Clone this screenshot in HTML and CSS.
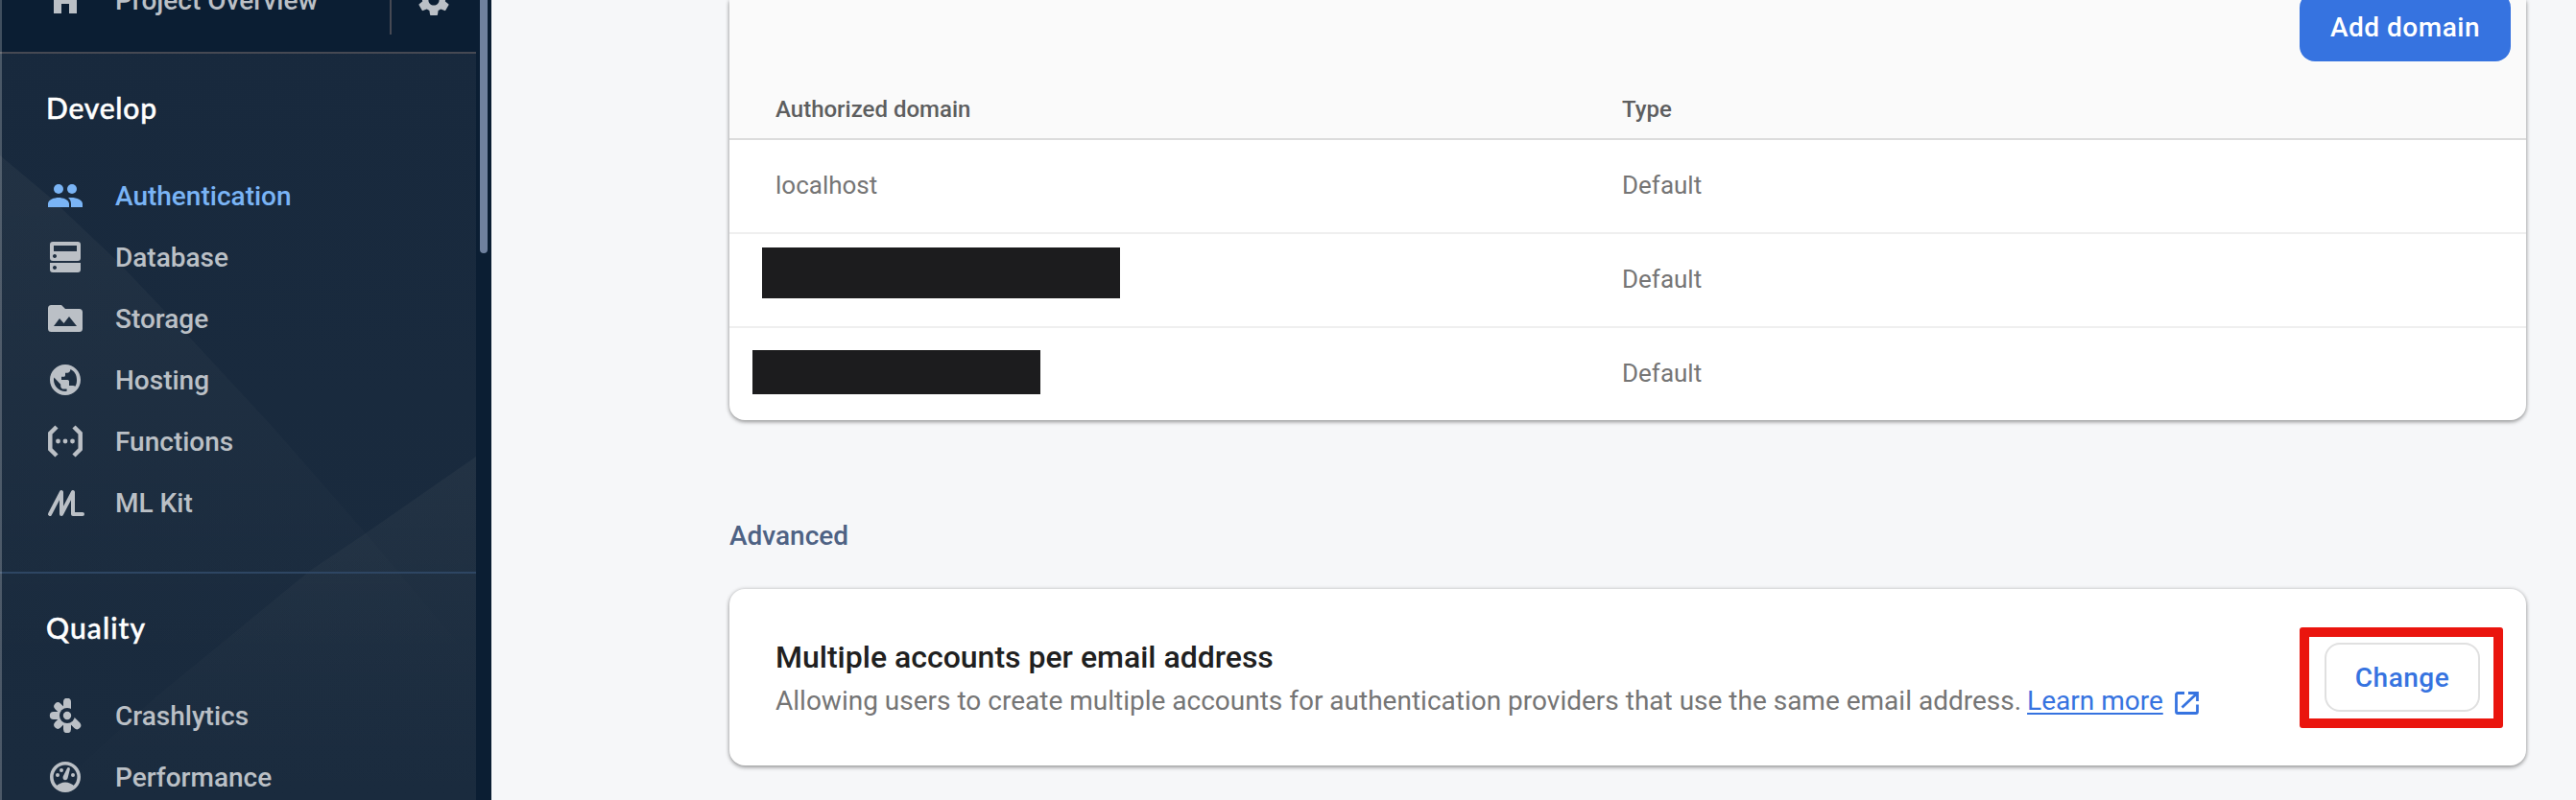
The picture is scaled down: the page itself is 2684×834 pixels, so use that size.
FILE: index.html
```html
<!DOCTYPE html>
<html lang="en">
<head>
<meta charset="utf-8">
<title>Authentication</title>
<link rel="stylesheet" href="styles.css">
</head>
<body>
<div class="app">
  <nav class="sidebar">
    <svg class="backdrop" viewBox="0 0 496 834" width="496" height="834" aria-hidden="true">
      <defs>
        <linearGradient id="fadeA" gradientUnits="userSpaceOnUse" x1="0" y1="160" x2="0" y2="700">
          <stop offset="0" stop-color="#fff3d8" stop-opacity=".042"/>
          <stop offset="1" stop-color="#fff3d8" stop-opacity="0"/>
        </linearGradient>
        <linearGradient id="fadeB" gradientUnits="userSpaceOnUse" x1="0" y1="470" x2="0" y2="834">
          <stop offset="0" stop-color="#fff3d8" stop-opacity=".042"/>
          <stop offset="1" stop-color="#fff3d8" stop-opacity="0"/>
        </linearGradient>
        <linearGradient id="base" x1="0" y1="0" x2="0" y2="1">
          <stop offset="0" stop-color="#18293d"/>
          <stop offset="1" stop-color="#1a2b3e"/>
        </linearGradient>
      </defs>
      <rect width="496" height="834" fill="url(#base)"/>
      <path d="M0 162L50 204 123 273 196 350 284 445 381 556 483 677 496 700H0z" fill="url(#fadeA)"/>
      <path d="M496 476L381 556 323 595 162 727 74 807 46 834H496z" fill="url(#fadeB)"/>
    </svg>
    <div class="nav-body">
      <div class="overview">
        <svg class="icon" viewBox="0 0 36 36"><path d="M14 32V22h8v10h8V18h5L18 3 1 18h5v14z"/></svg>
        <span class="label">Project Overview</span>
        <span class="settings">
          <svg class="icon" viewBox="0 0 36 36"><path transform="translate(-1.2 -1.2) scale(1.6)" d="M19.43 12.98c.04-.32.07-.64.07-.98s-.03-.66-.07-.98l2.11-1.65c.19-.15.24-.42.12-.64l-2-3.46c-.12-.22-.39-.3-.61-.22l-2.49 1c-.52-.4-1.08-.73-1.69-.98l-.38-2.65C14.46 2.18 14.25 2 14 2h-4c-.25 0-.46.18-.49.42l-.38 2.65c-.61.25-1.17.59-1.69.98l-2.49-1c-.23-.09-.49 0-.61.22l-2 3.46c-.13.22-.07.49.12.64l2.11 1.65c-.04.32-.07.65-.07.98s.03.66.07.98l-2.11 1.65c-.19.15-.24.42-.12.64l2 3.46c.12.22.39.3.61.22l2.49-1c.52.4 1.08.73 1.69.98l.38 2.65c.03.24.24.42.49.42h4c.25 0 .46-.18.49-.42l.38-2.65c.61-.25 1.17-.59 1.69-.98l2.49 1c.23.09.49 0 .61-.22l2-3.46c.12-.22.07-.49-.12-.64l-2.11-1.65zM12 15.5c-1.93 0-3.5-1.57-3.5-3.5s1.57-3.5 3.5-3.5 3.5 1.57 3.5 3.5-1.57 3.5-3.5 3.5z"/></svg>
        </span>
      </div>
      <section class="group">
        <h2 class="group-title develop">Develop</h2>
        <a class="item active">
          <svg class="icon" viewBox="0 0 36 36"><circle cx="11" cy="11" r="5"/><circle cx="25" cy="11" r="5"/><path d="M0 30V26.500C0 22 7 20 11 20S22 22 22 26.500V30zM24 30V26.500C24 23.500 22.800 21.500 21 20.300 28 19.200 36 22 36 26.500V30z"/></svg>
          <span class="label">Authentication</span>
        </a>
        <a class="item">
          <svg class="icon" viewBox="0 0 36 36"><path fill-rule="evenodd" d="M5 2h26a3 3 0 0 1 3 3v14a3 3 0 0 1-3 3H5a3 3 0 0 1-3-3V5a3 3 0 0 1 3-3zM6 6v6h24V6zM7 15a2 2 0 1 0 .01 0zM2 24h32v7a3 3 0 0 1-3 3H5a3 3 0 0 1-3-3zM7 27a2 2 0 1 0 .01 0z"/></svg>
          <span class="label">Database</span>
        </a>
        <a class="item">
          <svg class="icon" viewBox="0 0 36 36"><path fill-rule="evenodd" d="M3.500 4H14l4 4h14.500A3.500 3.500 0 0 1 36 11.500v17a3.500 3.500 0 0 1-3.500 3.500h-29A3.500 3.500 0 0 1 0 28.500v-21A3.500 3.500 0 0 1 3.500 4zM6 26h24l-8-10-5.500 7L12 18z"/></svg>
          <span class="label">Storage</span>
        </a>
        <a class="item">
          <svg class="icon" viewBox="0 0 36 36"><path transform="translate(-1.2 -1.2) scale(1.6)" d="M12 2C6.480 2 2 6.480 2 12s4.480 10 10 10 10-4.480 10-10S17.520 2 12 2zm1 17.400c-4.950.5-8.500-3.320-8.500-7.400 0-.62.080-1 .21-1.500L9 15v1c0 1.100.9 2 2 2h2zm5.500-3.200c-.46-.3-1-.5-1.500-.5h-2.500v-2.700c0-.55-.45-1-1-1H9.500v-2h1.500c.55 0 1-.45 1-1V7.500h1.300c1.100 0 2-.9 2-2v-.31c2.630 1.190 4.200 3.460 4.200 6.810 0 1.680-.2 2.970-1 4.200z"/></svg>
          <span class="label">Hosting</span>
        </a>
        <a class="item">
          <svg class="icon" viewBox="0 0 36 36"><path class="stroke" d="M9 3L2.300 9.700V26.300L9 33M27 3L33.700 9.700V26.300L27 33"/><circle cx="10.500" cy="18" r="2.400"/><circle cx="18" cy="18" r="2.400"/><circle cx="25.500" cy="18" r="2.400"/></svg>
          <span class="label">Functions</span>
        </a>
        <a class="item">
          <svg class="icon" viewBox="0 0 36 36"><path class="stroke round" d="M2 30L14 7V30L26 7V30H36"/></svg>
          <span class="label">ML Kit</span>
        </a>
      </section>
      <section class="group">
        <h2 class="group-title quality">Quality</h2>
        <a class="item">
          <svg class="icon" viewBox="0 0 36 36">
            <mask id="hub" maskUnits="userSpaceOnUse" x="0" y="0" width="36" height="36"><rect width="36" height="36" fill="#fff"/><circle cx="20" cy="18" r="8" fill="#000"/></mask>
            <g mask="url(#hub)"><path class="petals" d="M20 18V3.800M20 18L10.300 8.300M20 18H5.800M20 18L10.300 27.700M20 18V32.200M20 18L30.200 28.200"/><path d="M20 4h4v8h-4z"/></g>
            <circle cx="20" cy="18" r="4.200"/>
          </svg>
          <span class="label">Crashlytics</span>
        </a>
        <a class="item">
          <svg class="icon" viewBox="0 0 36 36"><circle class="ring" cx="18" cy="18" r="14.200"/><circle cx="10" cy="16" r="2"/><circle cx="14" cy="11" r="2"/><circle cx="26" cy="16" r="2"/><path d="M19.800 9.300c.8-2.300 3.700-1.300 3 .9l-2.200 8.800c-1 3.800-6.200 2.300-4.900-1.500zM8 28c3-3 6.500-4.500 10-4.500S25 25 28 28c-5 5-15 5-20 0z"/></svg>
          <span class="label">Performance</span>
        </a>
      </section>
    </div>
    <div class="scrollbar"><div class="thumb"></div></div>
  </nav>

  <main class="content">
    <section class="card domains">
      <div class="toolbar"><button class="btn primary">Add domain</button></div>
      <div class="row head"><span>Authorized domain</span><span>Type</span></div>
      <div class="row"><span>localhost</span><span>Default</span></div>
      <div class="row"><span class="redacted first"></span><span>Default</span></div>
      <div class="row"><span class="redacted second"></span><span>Default</span></div>
    </section>
    <h3 class="heading">Advanced</h3>
    <section class="card setting">
      <div class="copy">
        <h4 class="setting-title">Multiple accounts per email address</h4>
        <p class="desc"><span class="sentence">Allowing users to create multiple accounts for authentication providers that use the same email address.</span> <a class="link">Learn more</a><svg class="open" viewBox="0 0 25 24"><path d="M10 1.500H3A1.500 1.500 0 0 0 1.500 3V21A1.500 1.500 0 0 0 3 22.500H22A1.500 1.500 0 0 0 23.500 21V13.500M14 1.500H23.500V10M23 2L7.500 16.500"/></svg></p>
      </div>
      <div class="callout"><button class="btn outline">Change</button></div>
    </section>
  </main>
</div>
</body>
</html>
```
FILE: styles.css
```css
*, *::before, *::after { box-sizing: border-box; }
html, body { margin: 0; height: 834px; overflow: hidden; }
body { background: #f6f7f9; font-family: Roboto, sans-serif; }
h2, h3, h4, p { margin: 0; }
button { font-family: inherit; }

.app { display: flex; height: 834px; }

.sidebar {
  position: relative;
  display: flex;
  flex: none;
  width: 512px;
  height: 834px;
  overflow: hidden;
  background: #0b1e33;
}
.sidebar::before {
  content: "";
  position: absolute;
  z-index: 2;
  left: 0;
  top: 0;
  width: 2px;
  height: 100%;
  background: rgba(255, 255, 255, .22);
}
.backdrop { position: absolute; left: 0; top: 0; }
.nav-body { position: relative; width: 496px; margin-top: -54px; flex: none; }

.overview {
  display: flex;
  align-items: center;
  height: 110px;
  padding-left: 50px;
  border-bottom: 2px solid #464953;
  background: #0b1e33;
  color: #bbc0c6;
}
.settings {
  display: flex;
  align-items: center;
  justify-content: center;
  width: 90px;
  height: 72px;
  margin-left: auto;
  border-left: 2px solid #464953;
}
.icon { width: 36px; height: 36px; flex: none; overflow: visible; fill: currentColor; }
.label { margin-left: 34px; padding-top: 2px; font-size: 28px; line-height: 32px; font-weight: 500; white-space: nowrap; }

.group { height: 542px; padding-bottom: 40px; border-bottom: 2px solid #2e4663; }
.group-title {
  height: 116px;
  padding: 38px 0 0 48px;
  color: #fff;
  font: 500 30px/36px Lato, sans-serif;
  letter-spacing: .8px;
  -webkit-text-stroke: .5px #fff;
}
.quality { letter-spacing: 1.1px; }
.item { display: flex; align-items: center; height: 64px; padding-left: 50px; color: #bbc0c6; }
.item.active { color: #7ab4f5; }

.stroke { fill: none; stroke: currentColor; stroke-width: 4.500; }
.round { stroke-width: 4; stroke-linecap: round; stroke-linejoin: round; }
.petals { fill: none; stroke: currentColor; stroke-width: 8; stroke-linecap: round; }
.ring { fill: none; stroke: currentColor; stroke-width: 3.600; }

.scrollbar { position: relative; width: 16px; padding-left: 4px; }
.thumb { width: 8px; height: 264px; background: #6f819e; border-radius: 0 0 4px 4px; }

.content { flex: 1; padding: 0 52px 0 248px; }
.card {
  background: #fff;
  border-radius: 16px;
  box-shadow: 0 2px 4px rgba(0, 0, 0, .34), 0 0 4px rgba(0, 0, 0, .16);
}
.domains { height: 438px; border-radius: 0 0 16px 16px; overflow: hidden; }
.toolbar { display: flex; justify-content: flex-end; height: 84px; padding-right: 16px; background: #fafafa; }
.btn {
  height: 72px;
  padding: 0;
  border: 0;
  border-radius: 16px;
  font-size: 28px;
  font-weight: 500;
  letter-spacing: .5px;
}
.primary { width: 220px; margin-top: -8px; background: #3673e0; color: #fff; }
.outline { display: block; width: 162px; border: 2px solid #e0e0e0; background: #fff; color: #3673e0; }

.row {
  display: grid;
  grid-template-columns: 882px 1fr;
  align-items: center;
  height: 98px;
  padding: 0 0 2px 48px;
  border-bottom: 2px solid #efefef;
  color: #757575;
  font-size: 26px;
  line-height: 32px;
}
.row:last-child { border-bottom: 0; height: 96px; }
.row.head {
  height: 62px;
  padding-bottom: 0;
  border-bottom-color: #dcdcdc;
  background: #fafafa;
  color: #5d5e5f;
  font-size: 24px;
  font-weight: 500;
}
.redacted { background: #1c1c1e; }
.first { width: 373px; height: 53px; margin: -13px 0 0 -14px; }
.second { width: 300px; height: 46px; margin: -2px 0 0 -24px; }

.heading { padding-top: 105px; height: 176px; color: #4e6284; font-size: 28px; line-height: 32px; font-weight: 500; }
.setting { display: flex; height: 184px; padding: 49px 48px 0; }
.copy { flex: 1; }
.setting-title { color: #202020; font-size: 32px; line-height: 44px; font-weight: 500; }
.desc { display: flex; align-items: center; margin-top: 6px; color: #757575; font-size: 28px; line-height: 36px; white-space: nowrap; }
.link { margin-left: 6px; color: #3673e0; text-decoration: underline; text-decoration-thickness: 2px; text-underline-offset: 3px; }
.open { width: 25px; height: 24px; margin: 4px 0 0 12px; fill: none; stroke: #3673e0; stroke-width: 2.800; }
.callout { position: relative; margin-top: 7px; }
.callout::after {
  content: "";
  position: absolute;
  left: -26px;
  top: -16px;
  width: 212px;
  height: 105px;
  border: 10px solid #ea150e;
  border-radius: 3px;
}
```
